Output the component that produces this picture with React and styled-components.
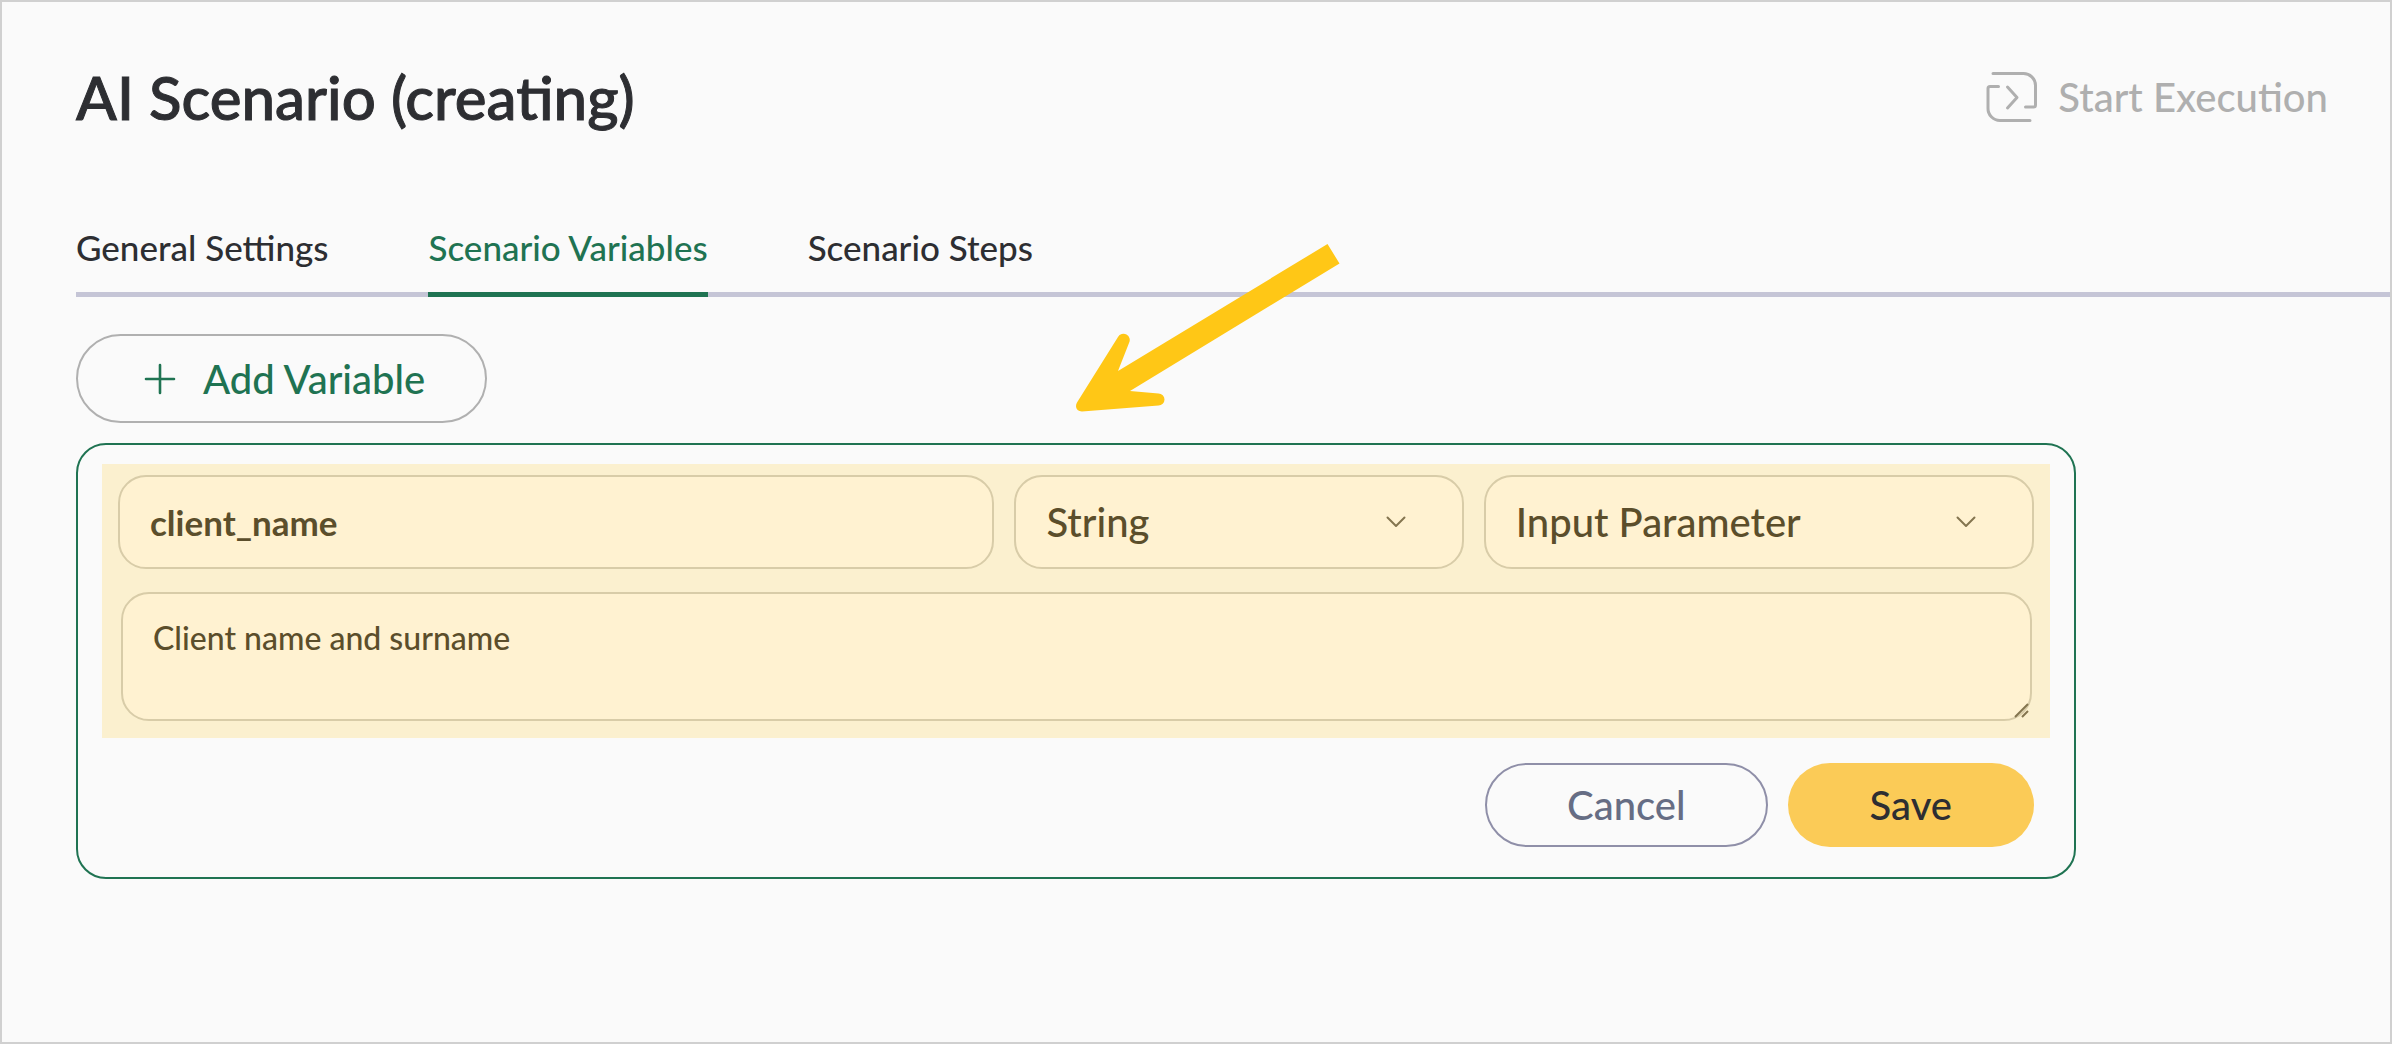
import React, { useState } from 'react';
import styled, { createGlobalStyle } from 'styled-components';

const tabs = ['General Settings', 'Scenario Variables', 'Scenario Steps'];
const types = ['String', 'Number', 'Boolean', 'Date'];
const scopes = ['Input Parameter', 'Output Parameter', 'Local'];

const StartIcon = () => (
  <svg width="52" height="52" viewBox="0 0 52 52" fill="none" aria-hidden="true">
    <g stroke="currentColor" strokeWidth="3" strokeLinecap="round" strokeLinejoin="round">
      <path d="M7 2.5H37a12 12 0 0 1 12.500 12V34a2 2 0 0 1-2 2h-8" />
      <path d="M12.500 15.500H4a2 2 0 0 0-2 2V37a12 12 0 0 0 12 12.500h30" />
      <path d="M21.500 16l9.500 10.500-9.500 10.500" />
    </g>
  </svg>
);

const PlusIcon = () => (
  <svg width="32" height="32" viewBox="0 0 32 32" fill="none" aria-hidden="true">
    <path d="M16 2v28M2 16h28" stroke="currentColor" strokeWidth="2.600" strokeLinecap="round" />
  </svg>
);

const Dropdown = ({ label, options, value, onChange }) => (
  <SelectBox>
    <Select aria-label={label} value={value} onChange={e => onChange(e.target.value)}>
      {options.map(option => (
        <option key={option}>{option}</option>
      ))}
    </Select>
    <Chevron viewBox="0 0 20 12" aria-hidden="true">
      <path d="M1.500 1.500L10 10l8.500-8.500" />
    </Chevron>
  </SelectBox>
);

const App = () => {
  const [activeTab, setActiveTab] = useState('Scenario Variables');
  const [name, setName] = useState('client_name');
  const [type, setType] = useState('String');
  const [scope, setScope] = useState('Input Parameter');
  const [description, setDescription] = useState('Client name and surname');

  return (
    <Page>
      <GlobalStyle />
      <Header>
        <Title>AI Scenario (creating)</Title>
        <StartButton type="button" disabled>
          <StartIcon />
          Start Execution
        </StartButton>
      </Header>

      <Tabs role="tablist">
        {tabs.map(tab => (
          <Tab
            key={tab}
            type="button"
            role="tab"
            aria-selected={tab === activeTab}
            $active={tab === activeTab}
            onClick={() => setActiveTab(tab)}
          >
            {tab}
          </Tab>
        ))}
      </Tabs>

      <Content>
        <AddButton type="button">
          <PlusIcon />
          Add Variable
        </AddButton>

        <Panel>
          <Highlight>
            <Fields>
              <NameInput
                aria-label="Variable name"
                value={name}
                onChange={e => setName(e.target.value)}
              />
              <Dropdown label="Type" options={types} value={type} onChange={setType} />
              <Dropdown label="Scope" options={scopes} value={scope} onChange={setScope} />
            </Fields>
            <DescriptionBox>
              <Description
                aria-label="Description"
                value={description}
                onChange={e => setDescription(e.target.value)}
              />
              <Grip viewBox="0 0 16 16" aria-hidden="true">
                <path d="M1 15L14 2M8 15l6-6" />
              </Grip>
            </DescriptionBox>
          </Highlight>
          <Actions>
            <CancelButton type="button">Cancel</CancelButton>
            <SaveButton type="submit">Save</SaveButton>
          </Actions>
        </Panel>
      </Content>

      <Arrow viewBox="0 0 264 172" aria-hidden="true">
        <path d="M251.500 0L263.500 19.500L54 147L82.500 149.500A6 6 0 0 1 82.500 161.500L6 167.500C1 167.500 -1.500 163 1 158.500L42 93A6 6 0 0 1 53 99L42 127Z" />
      </Arrow>
    </Page>
  );
};

export default App;

const GlobalStyle = createGlobalStyle`
  * {
    box-sizing: border-box;
  }

  body {
    margin: 0;
    background: #fafafa;
  }

  button,
  input,
  select,
  textarea {
    font-family: inherit;
    outline: none;
  }
`;

const Page = styled.div`
  position: relative;
  min-height: 100vh;
  padding-top: 59px;
  border: 2px solid #d0d0d0;
  background: #fafafa;
  color: #2d2e32;
  font-family: Lato, sans-serif;
  font-weight: 500;
`;

const Header = styled.header`
  display: flex;
  align-items: center;
  justify-content: space-between;
  padding: 0 62px 0 74px;
`;

const Title = styled.h1`
  margin: 0;
  font-size: 60px;
  font-weight: 500;
  line-height: 72px;
  -webkit-text-stroke: 1px currentColor;
`;

const Button = styled.button`
  display: flex;
  align-items: center;
  justify-content: center;
  padding: 0;
  border: 0;
  background: none;
  font-size: 40px;
  font-weight: 500;
  line-height: 48px;
  cursor: pointer;
`;

const StartButton = styled(Button)`
  gap: 20px;
  color: #afafaf;
  cursor: default;
`;

const Tabs = styled.div`
  display: flex;
  gap: 100px;
  margin: 92px 0 0 74px;
  box-shadow: inset 0 -5px #c5c5d6;
`;

const Tab = styled.button`
  padding: 0 0 23px;
  border: 0;
  border-bottom: 5px solid ${props => (props.$active ? '#1f7352' : 'transparent')};
  background: none;
  color: ${props => (props.$active ? '#1f7352' : '#2d2e32')};
  font-size: 35px;
  font-weight: 500;
  line-height: 44px;
  cursor: pointer;
`;

const Content = styled.main`
  padding: 37px 74px 40px;
`;

const AddButton = styled(Button)`
  gap: 27px;
  height: 89px;
  padding: 0 60px 0 66px;
  border: 2px solid #b0b0b0;
  border-radius: 45px;
  color: #1f7352;
`;

const Panel = styled.form`
  max-width: 2000px;
  margin-top: 20px;
  padding: 19px 24px 30px;
  border: 2px solid #1f7352;
  border-radius: 30px;
`;

const Highlight = styled.div`
  display: grid;
  gap: 23px;
  padding: 11px 16px 17px;
  background: #fbf0cf;
`;

const Fields = styled.div`
  display: grid;
  grid-template-columns: 876fr 449fr 550fr;
  gap: 20px;
`;

const NameInput = styled.input`
  min-width: 0;
  height: 94px;
  padding: 0 30px;
  border: 2px solid #d8cca8;
  border-radius: 28px;
  background: #fff2d1;
  color: #5b4e2b;
  font-size: 35px;
  font-weight: 700;
`;

const SelectBox = styled.div`
  display: grid;
  align-items: center;
  min-width: 0;
`;

const Select = styled.select`
  grid-area: 1 / 1;
  width: 100%;
  height: 94px;
  padding: 0 90px 0 30px;
  border: 2px solid #d8cca8;
  border-radius: 28px;
  background: #fff2d1;
  color: #5b4e2b;
  font-size: 40px;
  font-weight: 500;
  appearance: none;
`;

const Chevron = styled.svg`
  grid-area: 1 / 1;
  justify-self: end;
  width: 20px;
  height: 12px;
  margin-right: 58px;
  fill: none;
  stroke: #84754f;
  stroke-width: 2;
  stroke-linecap: round;
  stroke-linejoin: round;
  pointer-events: none;
`;

const DescriptionBox = styled.div`
  display: grid;
  padding: 0 2px 0 3px;
`;

const Description = styled.textarea`
  grid-area: 1 / 1;
  height: 129px;
  padding: 24px 30px;
  border: 2px solid #d8cca8;
  border-radius: 28px;
  background: #fff2d1;
  color: #5b4e2b;
  font-size: 32px;
  font-weight: 500;
  line-height: 40px;
  resize: none;
`;

const Grip = styled.svg`
  grid-area: 1 / 1;
  place-self: end;
  width: 16px;
  height: 16px;
  margin: 0 2px 3px 0;
  fill: none;
  stroke: #84754f;
  stroke-width: 2;
  pointer-events: none;
`;

const Actions = styled.div`
  display: flex;
  justify-content: flex-end;
  gap: 20px;
  margin-top: 25px;
  padding-right: 16px;
`;

const CancelButton = styled(Button)`
  height: 84px;
  padding: 0 80px;
  border: 2px solid #8f8fa8;
  border-radius: 42px;
  color: #666d84;
`;

const SaveButton = styled(Button)`
  height: 84px;
  padding: 0 82px;
  border-radius: 42px;
  background: #fbcb57;
  color: #2d2e32;
`;

/* callout pointing at the variable form */
const Arrow = styled.svg`
  position: absolute;
  top: 242px;
  left: 1074px;
  width: 264px;
  height: 172px;
  fill: #ffc716;
  pointer-events: none;
`;
